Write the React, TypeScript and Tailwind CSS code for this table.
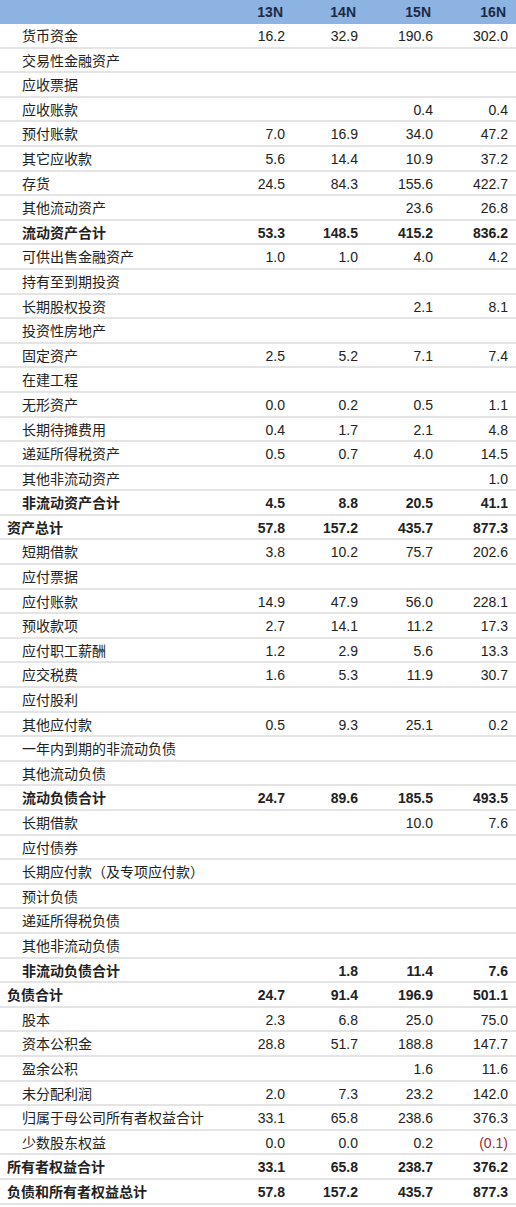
import React from "react";

type Row = {
  label: string;
  values: string[];
  bold?: boolean;
  top?: boolean;
};

const r = (label: string, values: string[] = ["", "", "", ""], bold = false, top = false): Row => ({
  label,
  values,
  bold,
  top,
});

const ROWS: Row[] = [
  r("货币资金", ["16.2", "32.9", "190.6", "302.0"]),
  r("交易性金融资产"),
  r("应收票据"),
  r("应收账款", ["", "", "0.4", "0.4"]),
  r("预付账款", ["7.0", "16.9", "34.0", "47.2"]),
  r("其它应收款", ["5.6", "14.4", "10.9", "37.2"]),
  r("存货", ["24.5", "84.3", "155.6", "422.7"]),
  r("其他流动资产", ["", "", "23.6", "26.8"]),
  r("流动资产合计", ["53.3", "148.5", "415.2", "836.2"], true),
  r("可供出售金融资产", ["1.0", "1.0", "4.0", "4.2"]),
  r("持有至到期投资"),
  r("长期股权投资", ["", "", "2.1", "8.1"]),
  r("投资性房地产"),
  r("固定资产", ["2.5", "5.2", "7.1", "7.4"]),
  r("在建工程"),
  r("无形资产", ["0.0", "0.2", "0.5", "1.1"]),
  r("长期待摊费用", ["0.4", "1.7", "2.1", "4.8"]),
  r("递延所得税资产", ["0.5", "0.7", "4.0", "14.5"]),
  r("其他非流动资产", ["", "", "", "1.0"]),
  r("非流动资产合计", ["4.5", "8.8", "20.5", "41.1"], true),
  r("资产总计", ["57.8", "157.2", "435.7", "877.3"], true, true),
  r("短期借款", ["3.8", "10.2", "75.7", "202.6"]),
  r("应付票据"),
  r("应付账款", ["14.9", "47.9", "56.0", "228.1"]),
  r("预收款项", ["2.7", "14.1", "11.2", "17.3"]),
  r("应付职工薪酬", ["1.2", "2.9", "5.6", "13.3"]),
  r("应交税费", ["1.6", "5.3", "11.9", "30.7"]),
  r("应付股利"),
  r("其他应付款", ["0.5", "9.3", "25.1", "0.2"]),
  r("一年内到期的非流动负债"),
  r("其他流动负债"),
  r("流动负债合计", ["24.7", "89.6", "185.5", "493.5"], true),
  r("长期借款", ["", "", "10.0", "7.6"]),
  r("应付债券"),
  r("长期应付款（及专项应付款）"),
  r("预计负债"),
  r("递延所得税负债"),
  r("其他非流动负债"),
  r("非流动负债合计", ["", "1.8", "11.4", "7.6"], true),
  r("负债合计", ["24.7", "91.4", "196.9", "501.1"], true, true),
  r("股本", ["2.3", "6.8", "25.0", "75.0"]),
  r("资本公积金", ["28.8", "51.7", "188.8", "147.7"]),
  r("盈余公积", ["", "", "1.6", "11.6"]),
  r("未分配利润", ["2.0", "7.3", "23.2", "142.0"]),
  r("归属于母公司所有者权益合计", ["33.1", "65.8", "238.6", "376.3"]),
  r("少数股东权益", ["0.0", "0.0", "0.2", "(0.1)"]),
  r("所有者权益合计", ["33.1", "65.8", "238.7", "376.2"], true, true),
  r("负债和所有者权益总计", ["57.8", "157.2", "435.7", "877.3"], true, true),
];

const YEARS = ["13N", "14N", "15N", "16N"];

export default function App() {
  return (
    <div className="w-[516px] h-[1207px] bg-white text-[#222] font-['Liberation_Sans','Noto_Sans_CJK_SC',sans-serif] overflow-hidden">
      {/* Header */}
      <div className="grid grid-cols-[211px_74px_73px_75px_75px] pr-2 h-6 bg-[#8db3e2] items-center">
        <div />
        {YEARS.map((y) => (
          <div key={y} className="text-right pr-[2px] text-[14px] font-bold text-[#1b2a45]">
            {y}
          </div>
        ))}
      </div>

      {/* Body */}
      {ROWS.map((row) => (
        <div
          key={row.label}
          className="grid grid-cols-[211px_74px_73px_75px_75px] pr-2 h-[24.6px] pt-[2px] items-center border-b-2 border-[#e4e4e4]"
        >
          <div
            className={`text-[14px] whitespace-nowrap ${row.top ? "pl-[7px]" : "pl-[22px]"} ${
              row.bold ? "font-bold" : ""
            }`}
          >
            {row.label}
          </div>
          {row.values.map((v, i) => (
            <div
              key={i}
              className={`text-right text-[14px] ${row.bold ? "font-bold" : ""} ${
                v.startsWith("(") ? "text-[#a0283c]" : ""
              }`}
            >
              {v}
            </div>
          ))}
        </div>
      ))}
    </div>
  );
}
